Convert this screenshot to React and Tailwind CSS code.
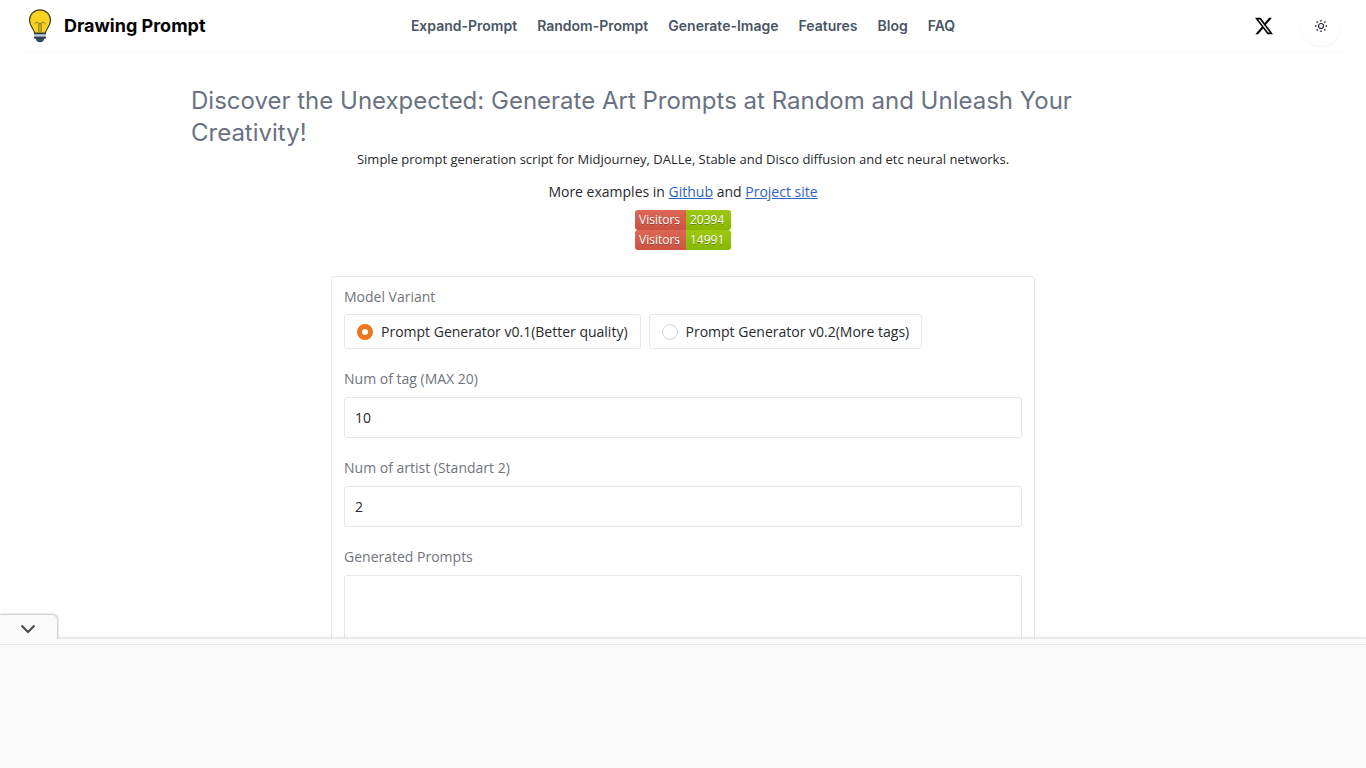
const NAV = ["Expand-Prompt", "Random-Prompt", "Generate-Image", "Features", "Blog", "FAQ"];

function Bulb() {
  return (
    <svg width="24" height="34" viewBox="0 0 24 34" aria-hidden="true">
      <path d="M6.500 24C6.500 20.500 1.500 17 1.500 11.300a10.500 10.500 0 0 1 21 0c0 5.700-5 9.200-5 12.700Z" fill="#fbd21f" stroke="#463f24" strokeWidth="1.200" />
      <path d="M10.900 23.500V15M13.100 23.500V15M7 14.600c.8-1.800 3.300-1.800 3.900.4M17 14.600c-.8-1.800-3.300-1.800-3.900.4M10.900 14.800c.4-1 1.800-1 2.200 0" fill="none" stroke="#6d6220" strokeWidth="1" />
      <path d="M6 24h12v1.600H6z" fill="#2f4250" />
      <path d="M6.500 25.600h11v2h-11z" fill="#b7d0dc" />
      <path d="M6 27.600h12v1.400l-2.300 1.500H8.300L6 29z" fill="#2f4250" />
      <path d="M8 30h8c0 2-1.700 3.300-4 3.300S8 32 8 30z" fill="#354b59" />
    </svg>
  );
}

function XLogo() {
  return (
    <svg width="18" height="18" viewBox="0 0 24 24" fill="#000" aria-hidden="true">
      <path d="M18.901 1.153h3.680l-8.040 9.190L24 22.846h-7.406l-5.800-7.584-6.638 7.584H.474l8.600-9.830L0 1.154h7.594l5.243 6.932ZM17.610 20.644h2.039L6.486 3.240H4.298Z" />
    </svg>
  );
}

function Sun() {
  return (
    <svg width="12" height="12" viewBox="0 0 12 12" fill="none" stroke="#1f2937" aria-hidden="true">
      <circle cx="6" cy="6" r="2.500" strokeWidth="1.200" />
      <path d="M6 0v1.500M6 10.500V12M0 6h1.500M10.500 6H12M1.600 1.600l1.100 1.100M9.300 9.300l1.100 1.100M1.600 10.400l1.100-1.100M9.300 2.700l1.100-1.100" strokeWidth="1.400" />
    </svg>
  );
}

function Visitors({ count }) {
  return (
    <div className="flex h-5 w-24 overflow-hidden rounded-[3px] text-xs leading-5 text-white [text-shadow:0_1px_0_#0000004d]">
      <span className="w-[51px] bg-linear-to-b from-[#dd6655] to-[#cb5343] pl-1">Visitors</span>
      <span className="flex-1 bg-linear-to-b from-[#9cc90f] to-[#88b703] pl-1">{count}</span>
    </div>
  );
}

function Choice({ label, checked }) {
  return (
    <label className="flex h-[35px] items-center gap-2 rounded-[3px] border border-gray-200 px-3">
      <input
        type="radio"
        name="model"
        defaultChecked={checked}
        className="size-4 appearance-none rounded-full border border-gray-300 bg-white checked:border-5 checked:border-[#ee7420]"
      />
      {label}
    </label>
  );
}

function Field({ id, label, value }) {
  return (
    <div className="flex flex-col gap-2">
      <label htmlFor={id} className="leading-5 text-[#71747b]">{label}</label>
      <input id={id} defaultValue={value} className="h-[41px] w-full rounded-[3px] border border-gray-200 px-2.5" />
    </div>
  );
}

export default function App() {
  return (
    <div className="flex h-screen flex-col overflow-hidden bg-white font-['Open_Sans',sans-serif] text-sm text-[#27292d]">
      <header className="mx-5 flex h-[53px] shrink-0 items-center border-b border-gray-50 font-['Inter',sans-serif]">
        <div className="flex flex-1 items-center">
          <a href="#home" className="ml-2 flex items-center gap-3 text-lg font-bold text-black">
            <Bulb />
            Drawing Prompt
          </a>
        </div>
        <nav className="flex gap-5 font-semibold text-gray-600">
          {NAV.map((n) => <a key={n} href={"#" + n}>{n}</a>)}
        </nav>
        <div className="flex flex-1 items-center justify-end gap-7">
          <a href="#x" aria-label="X"><XLogo /></a>
          <button type="button" aria-label="Theme" className="mr-[5px] flex size-10 items-center justify-center rounded-full shadow-xs"><Sun /></button>
        </div>
      </header>

      <main className="min-h-0 flex-1 overflow-hidden px-5 pt-8">
        <h1 className="mx-auto max-w-[984px] font-['Inter',sans-serif] text-2xl text-gray-500">
          Discover the Unexpected: Generate Art Prompts at Random and Unleash Your Creativity!
        </h1>
        <div className="flex flex-col items-center">
          <p className="text-[13px] leading-5">
            Simple prompt generation script for Midjourney, DALLe, Stable and Disco diffusion and etc neural networks.
          </p>
          <p className="mt-[11px] leading-6">
            More examples in <a href="#github" className="text-[#2f63c4] underline">Github</a> and{" "}
            <a href="#site" className="text-[#2f63c4] underline">Project site</a>
          </p>
          <div className="mt-1.5">
            <Visitors count="20394" />
            <Visitors count="14991" />
          </div>
        </div>

        <form className="mx-auto mt-[26px] flex max-w-[704px] flex-col gap-5 rounded-t border border-gray-200 px-3 py-2.5">
          <fieldset>
            <legend className="mb-[7px] leading-5 text-[#71747b]">Model Variant</legend>
            <div className="flex gap-2">
              <Choice label="Prompt Generator v0.1(Better quality)" checked />
              <Choice label="Prompt Generator v0.2(More tags)" />
            </div>
          </fieldset>
          <Field id="tags" label="Num of tag (MAX 20)" value="10" />
          <Field id="artists" label="Num of artist (Standart 2)" value="2" />
          <div className="flex flex-col gap-2">
            <label htmlFor="prompts" className="leading-5 text-[#71747b]">Generated Prompts</label>
            <textarea id="prompts" rows="8" className="w-full resize-none rounded-[3px] border border-gray-200 p-2.5" />
          </div>
        </form>
      </main>

      <footer className="relative h-[130px] shrink-0 border-t border-gray-200 bg-[#fafafa] shadow-[0_-1px_2px_#00000018]">
        <button
          type="button"
          aria-label="Collapse"
          className="absolute bottom-full left-0 flex h-[25px] w-[58px] items-center justify-center rounded-tr-md border-t border-r border-gray-300 bg-[#fafafa] pt-1 pr-0.5 shadow-[1px_-1px_1px_#00000018]"
        >
          <svg width="16" height="10" viewBox="0 0 16 10" fill="none" stroke="#4b4b4b" strokeWidth="2" aria-hidden="true">
            <path d="M1.500 1.500 8 8l6.500-6.500" />
          </svg>
        </button>
        <div className="h-1.5 border-b border-gray-200" />
      </footer>
    </div>
  );
}
